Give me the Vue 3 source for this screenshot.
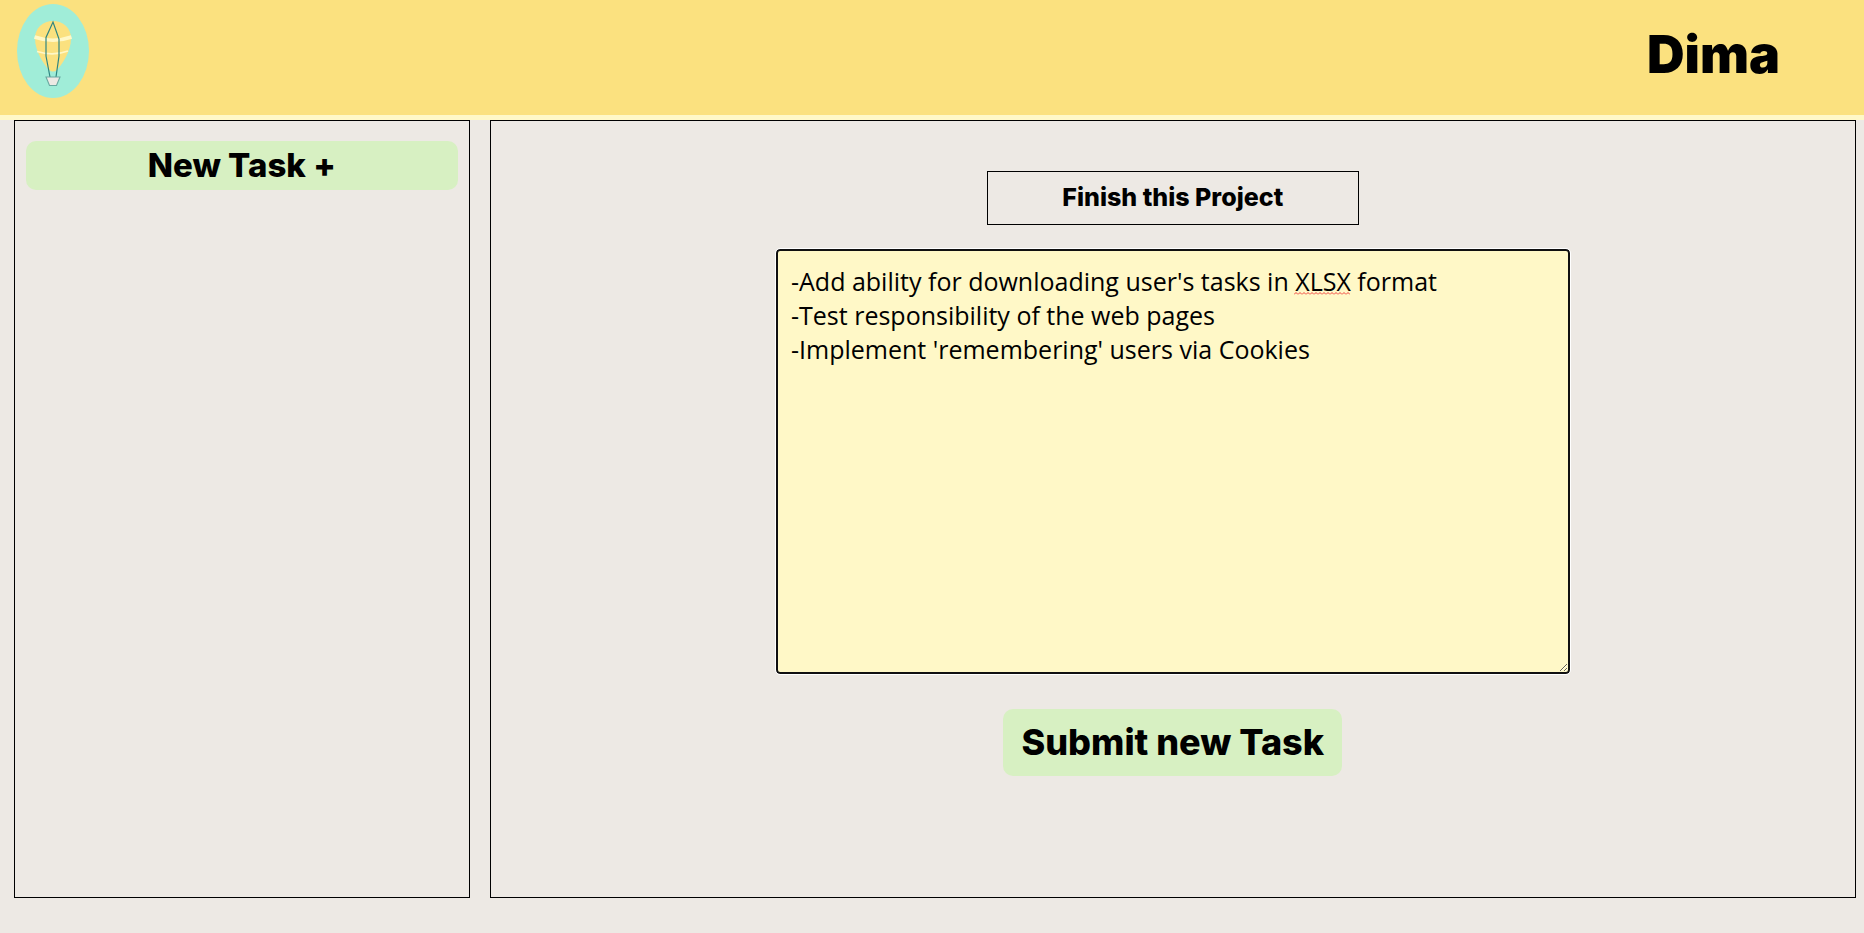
<script setup>
import { ref } from 'vue'

const userName = ref('Dima')
const title = ref('Finish this Project')
const body = ref(
  "-Add ability for downloading user's tasks in XLSX format\n" +
  '-Test responsibility of the web pages\n' +
  "-Implement 'remembering' users via Cookies"
)
</script>

<template>
  <div class="page">
    <header class="header">
      <a class="logo" href="#" aria-label="Home">
        <svg width="72" height="94" viewBox="0 0 72 94" aria-hidden="true">
          <ellipse cx="36" cy="47" rx="36" ry="47" fill="#a0edd8" />
          <path d="M36 17C46 17 54 24 54 34C54 48 45 60 40 66Q36 69 32 66C27 60 18 48 18 34C18 24 26 17 36 17Z" fill="#fbe17f" />
          <path d="M17.500 33Q36 39.500 54.500 33" fill="none" stroke="#fff8c7" stroke-width="3.600" />
          <path d="M20 47.500Q36 52.500 51 47" fill="none" stroke="#fff8c7" stroke-width="1.800" />
          <path d="M33 73L29 52V33.500L36 18L42 35V52L39 73" fill="none" stroke="#2f8580" stroke-width="1.200" />
          <path d="M29 73H43L39.500 81.500H32.500Z" fill="#ede9e4" stroke="#6aa9a1" stroke-width="1.100" />
        </svg>
      </a>
      <span class="user">{{ userName }}</span>
    </header>

    <main class="content">
      <aside class="panel sidebar">
        <button class="button new-task" type="button">New Task +</button>
      </aside>
      <form class="panel editor" @submit.prevent>
        <input v-model="title" class="title" type="text" aria-label="Task title" />
        <div class="note">
          <textarea v-model="body" class="text" aria-label="Task text"></textarea>
          <svg class="squiggle" width="56" height="3" aria-hidden="true">
            <defs>
              <pattern id="wave" width="4" height="3" patternUnits="userSpaceOnUse">
                <path d="M0 2.500L2 .5L4 2.500" fill="none" stroke="#f0403a" />
              </pattern>
            </defs>
            <rect width="56" height="3" fill="url(#wave)" />
          </svg>
        </div>
        <button class="button submit" type="submit">Submit new Task</button>
      </form>
    </main>
  </div>
</template>

<style>
body {
  margin: 0;
  background: #ede9e4;
}
</style>

<style scoped>
.page {
  display: flex;
  flex-direction: column;
  min-height: 100vh;
  box-sizing: border-box;
  padding-bottom: 35px;
  color: #000;
  font-family: Inter, "Liberation Sans", sans-serif;
}
.header {
  display: flex;
  justify-content: space-between;
  padding: 4px 84px 0 17px;
  min-height: 111px;
  background: #fbe17f;
  border-bottom: 5px solid #fff8c7;
}
.logo svg {
  display: block;
}
.user {
  padding-top: 20px;
  font-size: 52px;
  line-height: 62px;
  font-weight: 900;
}
.content {
  flex: 1;
  display: grid;
  grid-template-columns: 1fr 3fr;
  gap: 20px;
  padding: 0 8px 0 14px;
}
.panel {
  box-sizing: border-box;
  min-width: 0;
  border: 1px solid #000;
}
.sidebar {
  padding: 20px 11px;
}
.button {
  border: 0;
  border-radius: 10px;
  background: #d7f0c2;
  color: #000;
  font-family: inherit;
  font-weight: 800;
}
.new-task {
  display: block;
  width: 100%;
  height: 49px;
  padding: 0 0 2px;
  font-size: 33px;
}
.editor {
  display: flex;
  flex-direction: column;
  align-items: center;
  padding: 50px 21px;
}
.title {
  box-sizing: border-box;
  width: 372px;
  height: 54px;
  padding: 0 2px 2px;
  border: 1px solid #000;
  background: transparent;
  color: #000;
  text-align: center;
  font-family: inherit;
  font-size: 25px;
  font-weight: 800;
}
.note {
  position: relative;
  width: 60%;
  margin-top: 24px;
}
.text {
  display: block;
  box-sizing: border-box;
  width: 100%;
  height: 425px;
  padding: 13px;
  border: 2px solid #101010;
  border-radius: 4px;
  outline: 1px solid #fff;
  background: #fff8c7;
  color: #000;
  font-family: "Comic Sans MS", "Open Sans", sans-serif;
  font-size: 25px;
  line-height: 34px;
}
.squiggle {
  position: absolute;
  left: 518px;
  top: 43px;
  pointer-events: none;
}
.submit {
  height: 67px;
  padding: 0 18px 2px;
  margin-top: 35px;
  font-size: 36px;
}
</style>
